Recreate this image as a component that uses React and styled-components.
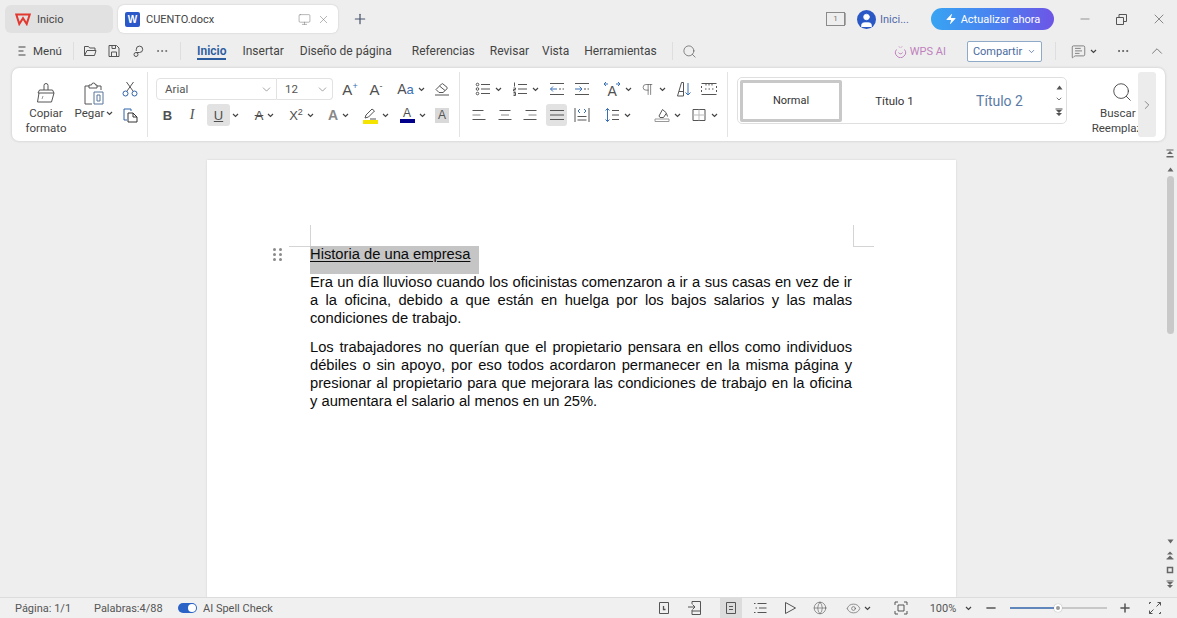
import styled, { createGlobalStyle } from "styled-components";
import { ChevronDown, ChevronRight, ChevronUp, Eye, Globe, Minus, Monitor, MessageSquareText, MoreHorizontal, Pilcrow, Plus, Search, User, X, Zap } from "lucide-react";

const GlobalStyle = createGlobalStyle`
  html, body { margin: 0; padding: 0; background: #eeeeee; }
  body { font-family: Roboto, "Open Sans", sans-serif; color: #444; }
`;

const Shell = styled.div`
  width: 1177px;
  height: 618px;
  display: flex;
  flex-direction: column;
  overflow: hidden;
  background: #eeeeee;
`;

const TitleBar = styled.div`
  height: 36px;
  flex: none;
  display: flex;
  align-items: flex-start;
  padding: 5px 0 0 5px;
  box-sizing: border-box;
`;

const Tab = styled.div`
  height: 28px;
  width: ${(p) => p.$w}px;
  margin-right: 5px;
  border-radius: 6px;
  display: flex;
  align-items: center;
  gap: 6px;
  padding: 0 8px 0 ${(p) => p.$pad}px;
  box-sizing: border-box;
  font-size: 11px;
  background: ${(p) => (p.$active ? "#fff" : "#e1e1e1")};
  box-shadow: ${(p) => (p.$active ? "0 0 2px rgba(0,0,0,.18)" : "none")};
`;

const TabName = styled.span`
  flex: 1;
`;

const WordBadge = styled.span`
  width: 15px;
  height: 15px;
  border-radius: 2px;
  background: #2b57c9;
  color: #fff;
  font: bold 10px "Liberation Sans", sans-serif;
  display: flex;
  align-items: center;
  justify-content: center;
`;

const TabClose = styled.span`
  display: flex;
  margin-left: 0;
  color: #777;
`;

const AddTab = styled.div`
  width: 34px;
  height: 28px;
  display: flex;
  align-items: center;
  justify-content: center;
  color: #46536b;
`;

const Spacer = styled.div`
  flex: 1;
`;

const TitleRight = styled.div`
  display: flex;
  align-items: center;
  height: 28px;
`;

const BookCount = styled.span`
  width: 17px;
  height: 12px;
  border: 1px solid #8a8a8a;
  font-size: 8px;
  line-height: 12px;
  text-align: center;
  color: #777;
  margin-right: 12px;
  box-shadow: 2px 0 0 -1px #aaa;
`;

const Avatar = styled.span`
  width: 19px;
  height: 19px;
  border-radius: 50%;
  background: #2a58c4;
  color: #fff;
  overflow: hidden;
  display: flex;
  align-items: flex-end;
  justify-content: center;
`;

const AccountName = styled.span`
  font-size: 11px;
  color: #5169a8;
  margin: 0 24px 0 4px;
  width: 27px;
  white-space: nowrap;
`;

const Upgrade = styled.div`
  width: 123px;
  height: 22px;
  border-radius: 11px;
  background: linear-gradient(90deg, #38a4f2 0%, #4b7ff0 55%, #6d55e6 100%);
  color: #fff;
  font-size: 11px;
  display: flex;
  align-items: center;
  justify-content: center;
  gap: 4px;
  margin-right: 12px;
`;

const WinBtn = styled.div`
  width: 37px;
  display: flex;
  justify-content: center;
  color: #555;
`;

const MenuBar = styled.div`
  height: 30px;
  flex: none;
  display: flex;
  align-items: center;
  padding-left: 17px;
  font-size: 12px;
`;

const MenuBtn = styled.div`
  display: flex;
  align-items: center;
  gap: 6px;
  font-size: 11.5px;
  width: 56px;
`;

const Sep = styled.div`
  width: 1px;
  height: ${(p) => p.$h || 20}px;
  background: #dedede;
  flex: none;
  margin: ${(p) => p.$m || "0"};
`;

const QuickIcons = styled.div`
  display: flex;
  align-items: center;
  gap: 10px;
  color: #555;
  margin: 0 11px 0 9px;
`;

const NavTab = styled.div`
  position: relative;
  margin-left: ${(p) => p.$ml}px;
  font-weight: ${(p) => (p.$active ? 600 : 400)};
  color: ${(p) => (p.$active ? "#2b5c9e" : "#444")};
  white-space: nowrap;
  &::after {
    content: "";
    display: ${(p) => (p.$active ? "block" : "none")};
    position: absolute;
    left: 0;
    right: 0;
    bottom: -2px;
    height: 2px;
    background: #2b5c9e;
  }
`;

const AiBtn = styled.div`
  display: flex;
  align-items: center;
  gap: 3px;
  font-size: 11px;
  color: #c080bd;
  margin-right: 21px;
`;

const ShareBtn = styled.div`
  width: 75px;
  height: 21px;
  border: 1px solid #8fa9c8;
  border-radius: 2px;
  box-sizing: border-box;
  background: #fff;
  color: #4a6aa0;
  font-size: 11px;
  display: flex;
  align-items: center;
  justify-content: center;
  gap: 5px;
  margin-right: 13px;
`;

const RightTools = styled.div`
  display: flex;
  align-items: center;
  color: #555;
  padding-right: 8px;
`;

const Ribbon = styled.div`
  height: 73px;
  flex: none;
  margin: 2px 12px 0 12px;
  background: #fff;
  border-radius: 7px;
  box-shadow: 0 0 3px rgba(0, 0, 0, 0.18);
  display: flex;
  align-items: stretch;
  overflow: hidden;
`;

const Group = styled.div`
  width: ${(p) => p.$w}px;
  flex: none;
  box-sizing: border-box;
  border-right: ${(p) => (p.$line ? "1px solid #e3e3e3" : "none")};
  margin: 4px 0;
  display: flex;
  padding-left: ${(p) => p.$pl || 0}px;
`;

const BigTool = styled.div`
  width: ${(p) => p.$w}px;
  display: flex;
  flex-direction: column;
  align-items: center;
  font-size: 11.5px;
  line-height: 15px;
  color: #444;
  text-align: center;
  padding-top: 10px;
  white-space: nowrap;
`;

const BigIcon = styled.div`
  height: 24px;
  color: #555;
`;

const PasteLabel = styled.span`
  display: flex;
  align-items: center;
  gap: 2px;
`;

const CopyCol = styled.div`
  width: 20px;
  display: flex;
  flex-direction: column;
  align-items: center;
  gap: 10px;
  padding-top: 9px;
  color: #4d6590;
`;

const ToolStack = styled.div`
  display: flex;
  flex-direction: column;
  gap: 4px;
  padding-top: 6px;
`;

const ToolRow = styled.div`
  display: flex;
  height: 22px;
  align-items: center;
`;

const Tool = styled.div`
  width: ${(p) => p.$w}px;
  margin-left: ${(p) => p.$ml || 0}px;
  height: 22px;
  flex: none;
  display: flex;
  align-items: center;
  justify-content: center;
  gap: ${(p) => p.$gap || 4}px;
  color: #555;
  border-radius: 3px;
  background: ${(p) => (p.$on ? "#e2e2e2" : "transparent")};
`;

const CaretMark = styled.svg`
  width: 7px;
  height: 5px;
  flex: none;
  fill: none;
  stroke: #444;
  stroke-width: 1.2;
`;

const Letter = styled.span`
  font-family: ${(p) => p.$font || '"Liberation Sans", sans-serif'};
  font-size: ${(p) => p.$size || 14}px;
  font-weight: ${(p) => p.$weight || 400};
  font-style: ${(p) => (p.$italic ? "italic" : "normal")};
  color: ${(p) => p.$color || "#505050"};
  line-height: 1;
  display: inline-block;
  text-decoration: ${(p) => p.$deco || "none"};
`;

const Sup = styled.sup`
  font-size: 9px;
  color: ${(p) => p.$color || "inherit"};
  line-height: 0;
`;

const ColorLine = styled.span`
  display: block;
  height: 4px;
  width: 15px;
  background: ${(p) => p.$c};
`;

const Swatch = styled.div`
  display: flex;
  flex-direction: column;
  align-items: center;
`;

const BoxA = styled.span`
  width: 14px;
  height: 15px;
  background: #d9d9d9;
  font: 12px "Liberation Sans", sans-serif;
  color: #555;
  display: flex;
  align-items: center;
  justify-content: center;
  margin-left: 4px;
`;

const Select = styled.div`
  height: 22px;
  width: ${(p) => p.$w}px;
  box-sizing: border-box;
  border: 1px solid #e2e2e2;
  border-left: ${(p) => (p.$joined ? "none" : "1px solid #e2e2e2")};
  border-radius: ${(p) => (p.$joined ? "0 4px 4px 0" : "4px 0 0 4px")};
  display: flex;
  align-items: center;
  justify-content: space-between;
  padding: 0 3px 0 8px;
  font-size: 11.5px;
  color: #555;
`;

const StyleBox = styled.div`
  width: 330px;
  height: 47px;
  margin: 9px 0 0 9px;
  border: 1px solid #dfdfdf;
  border-radius: 5px;
  box-sizing: border-box;
  display: flex;
  align-items: center;
  padding-left: 2px;
`;

const StyleItem = styled.div`
  width: ${(p) => p.$w}px;
  height: 42px;
  box-sizing: border-box;
  display: flex;
  align-items: center;
  justify-content: center;
  border: ${(p) => (p.$on ? "3px solid #c8c8c8" : "none")};
  border-radius: 2px;
  font-size: ${(p) => p.$size || 11.5}px;
  color: ${(p) => p.$color || "#333"};
  flex: none;
`;

const StyleArrows = styled.div`
  margin-left: auto;
  width: 16px;
  display: flex;
  flex-direction: column;
  align-items: center;
  gap: 5px;
  color: #555;
`;

const FindTool = styled.div`
  width: 49px;
  margin-left: 22px;
  overflow: hidden;
  flex: none;
`;

const FindInner = styled.div`
  width: 66px;
  display: flex;
  flex-direction: column;
  align-items: center;
  padding-top: 13px;
  font-size: 11.5px;
  line-height: 15px;
  white-space: nowrap;
  color: #444;
`;

const FindLabel = styled.span`
  margin-top: ${(p) => p.$mt || 0}px;
`;

const MoreBtn = styled.div`
  width: 18px;
  margin: 4px 0;
  background: #ececec;
  border-radius: 3px;
  display: flex;
  align-items: center;
  justify-content: center;
  color: #444;
  flex: none;
`;

const DocArea = styled.div`
  flex: 1;
  display: flex;
  min-height: 0;
`;

const PageWrap = styled.div`
  flex: 1;
  padding-top: 19px;
  overflow: hidden;
  display: flex;
  justify-content: center;
`;

const Page = styled.div`
  width: 749px;
  height: 800px;
  background: #fff;
  box-shadow: 0 0 2px rgba(0, 0, 0, 0.12);
  padding: 86px 104px 0 103px;
  box-sizing: border-box;
  position: relative;
  font-family: "Liberation Sans", Arial, sans-serif;
  font-size: 14.72px;
  line-height: 18.2px;
  color: #0c0c0c;
`;

const CropMark = styled.div`
  position: absolute;
  top: ${(p) => p.$top}px;
  left: ${(p) => p.$left}px;
  width: ${(p) => p.$w}px;
  height: ${(p) => p.$h}px;
  background: #d4d4d4;
`;

const Handle = styled.div`
  position: absolute;
  left: 66px;
  top: 88px;
  width: 9px;
  display: grid;
  grid-template-columns: 3px 3px;
  gap: 2px 3px;
  & > span {
    width: 3px;
    height: 3px;
    border-radius: 50%;
    background: #8a8a8a;
  }
`;

const Heading = styled.div`
  width: 169px;
  height: 28px;
  margin-bottom: -1px;
  line-height: 16.5px;
  background: #c5c5c5;
  & > u {
    text-underline-offset: 2px;
  }
`;

const Para = styled.p`
  margin: 0 0 10px;
  text-align: justify;
`;

const Rail = styled.div`
  width: 14px;
  flex: none;
  display: flex;
  flex-direction: column;
  align-items: center;
  padding-top: 8px;
  color: #666;
`;

const RailArrow = styled.div`
  margin-top: ${(p) => p.$mt || 0}px;
  display: flex;
`;

const Thumb = styled.div`
  width: 7px;
  height: 158px;
  flex: none;
  margin-top: 4px;
  background: #c9c9c9;
  border-radius: 4px;
`;

const RailBottom = styled.div`
  margin-top: auto;
  padding-bottom: 8px;
  display: flex;
  flex-direction: column;
  align-items: center;
  gap: 6px;
`;

const StatusBar = styled.div`
  height: 21px;
  flex: none;
  border-top: 1px solid #dcdcdc;
  box-sizing: border-box;
  background: #f0f0f0;
  display: flex;
  align-items: center;
  padding-left: 15px;
  font-size: 11px;
  color: #555;
`;

const StatusText = styled.span`
  width: ${(p) => p.$w}px;
  white-space: nowrap;
`;

const Toggle = styled.span`
  width: 19px;
  height: 10px;
  border-radius: 5px;
  background: #2a62c6;
  margin-right: 6px;
  display: flex;
  justify-content: flex-end;
  align-items: center;
  padding-right: 1px;
  box-sizing: border-box;
  &::after {
    content: "";
    width: 8px;
    height: 8px;
    border-radius: 50%;
    background: #fff;
  }
`;

const StatusTools = styled.div`
  margin-left: auto;
  display: flex;
  align-items: center;
  padding-right: 2px;
  height: 100%;
  color: #555;
`;

const StatusBtn = styled.div`
  width: ${(p) => p.$w || 29}px;
  margin-left: ${(p) => p.$ml || 0}px;
  height: 21px;
  display: flex;
  align-items: center;
  justify-content: center;
  gap: ${(p) => p.$gap || 3}px;
  background: ${(p) => (p.$on ? "#dcdcdc" : "transparent")};
  flex: none;
`;

const Slider = styled.div`
  width: 97px;
  height: 2px;
  background: linear-gradient(90deg, #6186bb 0 50%, #c8c8c8 50% 100%);
  position: relative;
  margin: 0 8px 0 6px;
  &::after {
    content: "";
    position: absolute;
    left: 44px;
    top: -3px;
    width: 8px;
    height: 8px;
    box-sizing: border-box;
    border-radius: 50%;
    background: #999;
    border: 2px solid #fff;
    box-shadow: 0 0 1px #888;
  }
`;

const Blue = "#3a6fb5";

function Glyph({ size = 16, sw = 1, children }) {
  return (
    <svg width={size} height={size} viewBox={`0 0 ${size} ${size}`} fill="none" stroke="currentColor" strokeWidth={sw} style={{ flex: "none" }}>
      {children}
    </svg>
  );
}

function Caret() {
  return (
    <CaretMark viewBox="0 0 7 5">
      <path d="M1 1l2.500 2.500L6 1" />
    </CaretMark>
  );
}

function WpsLogo() {
  return (
    <svg width="16" height="13" viewBox="0 0 16 13" fill="none" stroke="#e2382f" strokeWidth="2">
      <path d="M1.300 1.600H14.700L11.700 11 8 5.200 4.300 11z" />
    </svg>
  );
}

function Drop({ w, ml, children }) {
  return (
    <Tool $w={w} $ml={ml}>
      {children}
      <Caret />
    </Tool>
  );
}

const LinesIcon = ({ a, b }) => (
  <Glyph>
    <path d={a} />
    <path d={b} stroke="#888" />
  </Glyph>
);

const MenuIcon = () => <Glyph size={10}><path d="M1.500 1h7M1.500 5h5M1.500 9h7" /></Glyph>;
const OpenIcon = () => <Glyph size={14}><path d="M1.500 11.500v-9h4l1.200 1.500h5.300v2M1.500 11.500h10l1.500-5H4z" /></Glyph>;
const SaveIcon = () => <Glyph size={14}><path d="M2 1.500h7.500l2.500 2.500v8.500H2zM5 1.500v3h3.500v-3M4.500 12.500V8h5v4.500" /></Glyph>;
const PathIcon = () => <Glyph size={14}><path d="M5 8.500h3.500a3.200 3.200 0 1 0-3.200-3.200V7M5 8.500a2 2 0 1 0 0 4 2 2 0 0 0 0-4z" /></Glyph>;
const BrushIcon = () => (
  <Glyph size={24}>
    <path d="M10 8V3.500a2 2 0 0 1 4 0V8M4 11l1.500-3h13l1.500 3zM5 11l-1.500 9h14l2.500-9" />
    <path d="M8 17l1-3" stroke="#999" />
  </Glyph>
);
const PasteIcon = () => (
  <Glyph size={24}>
    <path d="M7 4H3v18h7M15 4h4v4M7 6V3h2.500a2 2 0 0 1 4 0H15v3z" />
    <path d="M12 10h9v12h-9zM15 13v6h3v-6z" stroke="#58749c" />
  </Glyph>
);
const ScissorsIcon = () => (
  <Glyph>
    <path d="M5 10L11.500 1M11 10L4.500 1" stroke="#555" />
    <circle cx="3.500" cy="12.500" r="2.500" stroke="#2f62a8" />
    <circle cx="12.500" cy="12.500" r="2.500" stroke="#2f62a8" />
  </Glyph>
);
const CopyIcon = () => (
  <Glyph>
    <path d="M5 13H2V2h7v2" stroke="#2f62a8" />
    <path d="M6 6h5l4 4v5H6zM11 6v4h4" stroke="#333" />
  </Glyph>
);
const EraserIcon = () => <Glyph><path d="M2 8.500L7.500 3a1 1 0 0 1 1.500 0l4 3.300a1 1 0 0 1 0 1.500L9 11.500H5zM5.500 5L11 9.500M1 14h14" /></Glyph>;
const BulletIcon = () => (
  <Glyph>
    <path d="M6 3.500h9M6 8h9M6 12.500h9" />
    <circle cx="2.500" cy="3.500" r="1.300" />
    <circle cx="2.500" cy="8" r="1.300" />
    <circle cx="2.500" cy="12.500" r="1.300" />
  </Glyph>
);
const NumberIcon = () => (
  <Glyph>
    <path d="M6 3.500h9M6 8h9M6 12.500h9M2.500 1.500v4M1.500 7h2v1.500h-2V10h2M1.500 11.500h2v3h-2M1.500 13h2" />
  </Glyph>
);
const OutdentIcon = () => (
  <Glyph>
    <path d="M1 2.500h14M1 13.500h14M10 8h2M13.500 8h1.500" stroke="#555" />
    <path d="M1.500 8H8M4 5.500L1.500 8 4 10.500" stroke={Blue} />
  </Glyph>
);
const IndentIcon = () => (
  <Glyph>
    <path d="M1 2.500h14M1 13.500h14M10 8h2M13.500 8h1.500" stroke="#555" />
    <path d="M1 8h7M5.500 5.500L8 8l-2.500 2.500" stroke={Blue} />
  </Glyph>
);
const GrowIcon = () => (
  <Glyph size={18}>
    <text x="4.500" y="16" fontSize="14" fontFamily="Liberation Sans" fill="#505050" stroke="none">A</text>
    <path d="M1 4h4M3 2L1 4l2 2M13 4h4M15 2l2 2-2 2" stroke={Blue} />
  </Glyph>
);
const SortIcon = () => (
  <Glyph>
    <path d="M1.500 15L5.500 1.500h2V15M3 10.500h4.500M1.500 15h6" />
    <path d="M12 2v12M9.500 11.500L12 14l2.500-2.500" stroke={Blue} />
  </Glyph>
);
const RulerIcon = () => (
  <Glyph>
    <path d="M0.500 2.500h15M0.500 13.500h15" />
    <path d="M0.500 5v2M0.500 9v2M15.500 5v2M15.500 9v2M4 8h1.500M7.500 8H9M11 8h1.500M5 3v1.500M8 3v1.500M11 3v1.500" />
  </Glyph>
);
const AlignL = () => <LinesIcon a="M1.500 3.500h11M1.500 12.500h13" b="M1.500 8h8" />;
const AlignC = () => <LinesIcon a="M2.500 3.500h11M1.500 12.500h13" b="M4 8h8" />;
const AlignR = () => <LinesIcon a="M3.500 3.500h11M1.500 12.500h13" b="M6.500 8h8" />;
const AlignJ = () => <Glyph><path d="M1 3.500h14M1 8h14M1 12.500h14" /></Glyph>;
const DistIcon = () => (
  <Glyph>
    <path d="M1 1v14M15 1v14M3.500 9.500h9M3.500 13h9" />
    <path d="M6 2L4 4l2 2M10 2l2 2-2 2" stroke={Blue} />
  </Glyph>
);
const SpacingIcon = () => (
  <Glyph>
    <path d="M3.500 1.500v13M1.500 3.500l2-2 2 2M1.500 12.500l2 2 2-2" stroke={Blue} />
    <path d="M8 3.500h7M8 8h7M8 12.500h7" />
  </Glyph>
);
const BucketIcon = () => (
  <Glyph>
    <path d="M5 9l3.500-6.500 4 3.500-3 4.500H6zM12.500 6.500l1 3" />
    <path d="M1 12h14v2.500H1z" stroke="#999" />
  </Glyph>
);
const BorderIcon = () => (
  <Glyph>
    <path d="M2 2.500h12v11H2z" />
    <path d="M8 2.500v11M2 8h12" stroke="#bbb" />
  </Glyph>
);
const PenIcon = () => (
  <Glyph size={14}>
    <path d="M2 12l1-3 6-6 2.500 2-6 6zM7 13h6" />
  </Glyph>
);
const RestoreIcon = () => <Glyph size={13}><path d="M1.500 4.500h7v7h-7zM4 4.500V1.500h7.500v7H8.500" /></Glyph>;
const AiIcon = () => (
  <Glyph size={13}>
    <path d="M2.500 4.500a5 5 0 1 0 8 0M5 1.500l.8 1M8 1.500l-.8 1M4.500 7.500a2.200 2.200 0 0 0 4 0" />
  </Glyph>
);
const HistoryIcon = () => (
  <Glyph size={14}>
    <path d="M2.500 1.500h9v11h-9z" />
    <path d="M6.500 5v3.500h2" strokeWidth="1.300" />
  </Glyph>
);
const ImportIcon = () => (
  <Glyph size={16}>
    <path d="M5 1.500h8.500v13H5M5 11h8.500" />
    <path d="M1 7h7M5.500 4.500L8 7 5.500 9.500M5 1.500v2.500M5 10v4.500" />
  </Glyph>
);
const PageIcon = () => <Glyph size={14}><path d="M2.500 1.500h9v11h-9zM5 5.500h4M5 8.500h4" /></Glyph>;
const OutlineIcon = () => <Glyph size={14}><path d="M4.500 2.500h9M6 7h7.500M4.500 11.500h9M1 2.500h1.500M2.500 7H4M1 11.500h1.500" /></Glyph>;
const PlayIcon = () => <Glyph size={14}><path d="M2.500 1.500L12.500 7 2.500 12.500z" /></Glyph>;
const FocusIcon = () => (
  <Glyph size={14}>
    <path d="M4 1H1v3M10 1h3v3M4 13H1v-3M10 13h3v-3" />
    <path d="M4 4h6v6H4z" />
  </Glyph>
);
const FullIcon = () => (
  <Glyph size={14}>
    <path d="M8.500 5.500L12.500 1.500M9.500 1.500h3v3M5.500 8.500L1.500 12.500M1.500 9.500v3h3M1.500 3V1.500H3M12.500 11v1.500H11" />
  </Glyph>
);
const RailTriUp = () => <svg width="7" height="5" viewBox="0 0 7 5" fill="currentColor"><path d="M3.500 0.500L6.500 4.500H.5z" /></svg>;
const RailTriDown = () => <svg width="7" height="5" viewBox="0 0 7 5" fill="currentColor"><path d="M.5 .5h6L3.500 4.500z" /></svg>;
const RailFirst = () => <svg width="8" height="9" viewBox="0 0 8 9" fill="currentColor"><path d="M.5 .5h7v1h-7zM4 2l3 3H1zM.5 7h7v1.500h-7z" /></svg>;
const RailPrev = () => <svg width="8" height="9" viewBox="0 0 8 9" fill="currentColor"><path d="M4 .5l3 3H1zM4 4.500l3 3H1zM.5 7.500h7v1h-7z" /></svg>;
const RailDot = () => <svg width="8" height="8" viewBox="0 0 8 8" fill="none" stroke="currentColor" strokeWidth="1.500"><path d="M1.500 1.500h5v5h-5z" /></svg>;
const RailNext = () => <svg width="8" height="9" viewBox="0 0 8 9" fill="currentColor"><path d="M.5 .5h7v1h-7zM1 2h6L4 5zM1 5h6L4 8z" /></svg>;

export default function App() {
  return (
    <Shell>
      <GlobalStyle />
      <TitleBar>
        <Tab $w={108} $pad={10}>
          <WpsLogo />
          <TabName>Inicio</TabName>
        </Tab>
        <Tab $w={220} $pad={7} $active>
          <WordBadge>W</WordBadge>
          <TabName>CUENTO.docx</TabName>
          <TabClose><Monitor size={13} strokeWidth={1} /></TabClose>
          <TabClose><X size={13} strokeWidth={1} /></TabClose>
        </Tab>
        <AddTab>
          <Plus size={16} strokeWidth={1.8} />
        </AddTab>
        <Spacer />
        <TitleRight>
          <BookCount>1</BookCount>
          <Avatar>
            <User size={17} fill="#fff" strokeWidth={1} />
          </Avatar>
          <AccountName>Inici...</AccountName>
          <Upgrade>
            <Zap size={12} fill="#fff" strokeWidth={0} />
            Actualizar ahora
          </Upgrade>
          <WinBtn><Minus size={14} strokeWidth={1} /></WinBtn>
          <WinBtn><RestoreIcon /></WinBtn>
          <WinBtn><X size={16} strokeWidth={1} /></WinBtn>
        </TitleRight>
      </TitleBar>

      <MenuBar>
        <MenuBtn>
          <MenuIcon />
          Menú
        </MenuBtn>
        <Sep $h={18} />
        <QuickIcons>
          <OpenIcon />
          <SaveIcon />
          <PathIcon />
          <MoreHorizontal size={14} strokeWidth={1.2} />
        </QuickIcons>
        <Sep $h={18} />
        <NavTab $ml={16} $active>Inicio</NavTab>
        <NavTab $ml={16}>Insertar</NavTab>
        <NavTab $ml={16}>Diseño de página</NavTab>
        <NavTab $ml={20}>Referencias</NavTab>
        <NavTab $ml={15}>Revisar</NavTab>
        <NavTab $ml={13}>Vista</NavTab>
        <NavTab $ml={15}>Herramientas</NavTab>
        <Sep $h={18} $m="0 0 0 15px" />
        <Search size={15} strokeWidth={1.1} color="#555" style={{ marginLeft: 9 }} />
        <Spacer />
        <AiBtn>
          <AiIcon />
          WPS AI
        </AiBtn>
        <ShareBtn>
          Compartir
          <ChevronDown size={9} />
        </ShareBtn>
        <Sep $h={18} />
        <RightTools>
          <Tool $w={56}>
            <MessageSquareText size={15} strokeWidth={1.1} />
            <Caret />
          </Tool>
          <Tool $w={22}><MoreHorizontal size={14} strokeWidth={1.6} /></Tool>
          <Tool $w={24} $ml={11}><ChevronUp size={18} strokeWidth={1} /></Tool>
        </RightTools>
      </MenuBar>

      <Ribbon>
        <Group $w={136} $line $pl={12}>
          <BigTool $w={44}>
            <BigIcon><BrushIcon /></BigIcon>
            Copiar
            <br />
            formato
          </BigTool>
          <BigTool $w={52}>
            <BigIcon><PasteIcon /></BigIcon>
            <PasteLabel>Pegar<Caret /></PasteLabel>
          </BigTool>
          <CopyCol>
            <ScissorsIcon />
            <CopyIcon />
          </CopyCol>
        </Group>

        <Group $w={312} $line $pl={8}>
          <ToolStack>
            <ToolRow>
              <Select $w={121}>Arial<ChevronDown size={13} strokeWidth={1} /></Select>
              <Select $w={56} $joined>12<ChevronDown size={13} strokeWidth={1} /></Select>
              <Tool $w={26} $ml={4}><Letter $size={15}>A<Sup $color={Blue}>+</Sup></Letter></Tool>
              <Tool $w={26}><Letter $size={15}>A<Sup>-</Sup></Letter></Tool>
              <Drop w={44}><Letter $size={14}>A<Letter $size={13} $color={Blue}>a</Letter></Letter></Drop>
              <Tool $w={18}><EraserIcon /></Tool>
            </ToolRow>
            <ToolRow>
              <Tool $w={23}><Letter $weight={700} $size={13}>B</Letter></Tool>
              <Tool $w={26}><Letter $italic $size={14} $font='"Liberation Serif", serif'>I</Letter></Tool>
              <Tool $w={23} $ml={2} $on><Letter $size={13} $deco="underline">U</Letter></Tool>
              <Tool $w={11}><Caret /></Tool>
              <Drop w={37} ml={5}><Letter $size={13} $deco="line-through">A</Letter></Drop>
              <Drop w={37}><Letter $size={13}>X<Sup>2</Sup></Letter></Drop>
              <Drop w={37}><Letter $size={14} $weight={700} $color="#888">A</Letter></Drop>
              <Drop w={37}><Swatch><PenIcon /><ColorLine $c="#f4e400" /></Swatch></Drop>
              <Drop w={37}><Swatch><Letter $size={12}>A</Letter><ColorLine $c="#00008b" /></Swatch></Drop>
              <BoxA>A</BoxA>
            </ToolRow>
          </ToolStack>
        </Group>

        <Group $w={268} $line $pl={10}>
          <ToolStack>
            <ToolRow>
              <Drop w={36}><BulletIcon /></Drop>
              <Drop w={38}><NumberIcon /></Drop>
              <Tool $w={25}><OutdentIcon /></Tool>
              <Tool $w={26}><IndentIcon /></Tool>
              <Drop w={44}><GrowIcon /></Drop>
              <Drop w={28}><Pilcrow size={15} strokeWidth={1.1} /></Drop>
              <Tool $w={34}><SortIcon /></Tool>
              <Tool $w={16}><RulerIcon /></Tool>
            </ToolRow>
            <ToolRow>
              <Tool $w={18}><AlignL /></Tool>
              <Tool $w={34}><AlignC /></Tool>
              <Tool $w={16}><AlignR /></Tool>
              <Tool $w={21} $ml={8} $on><AlignJ /></Tool>
              <Tool $w={30}><DistIcon /></Tool>
              <Drop w={40}><SpacingIcon /></Drop>
              <Drop w={41} ml={10}><BucketIcon /></Drop>
              <Drop w={33}><BorderIcon /></Drop>
            </ToolRow>
          </ToolStack>
        </Group>

        <StyleBox>
          <StyleItem $w={102} $on $size={11}>Normal</StyleItem>
          <StyleItem $w={105}>Título 1</StyleItem>
          <StyleItem $w={105} $size={14} $color="#5a7ba6">Título 2</StyleItem>
          <StyleArrows>
            <RailTriUp />
            <ChevronDown size={8} strokeWidth={2.4} />
            <RailNext />
          </StyleArrows>
        </StyleBox>

        <FindTool>
          <FindInner>
            <Search size={22} strokeWidth={1} />
            <FindLabel $mt={3}>Buscar y</FindLabel>
            <FindLabel>Reemplazar</FindLabel>
          </FindInner>
        </FindTool>
        <MoreBtn><ChevronRight size={14} strokeWidth={1} /></MoreBtn>
      </Ribbon>

      <DocArea>
        <PageWrap>
          <Page>
            <CropMark $top={65} $left={103} $w={1} $h={21} />
            <CropMark $top={86} $left={82} $w={21} $h={1} />
            <CropMark $top={65} $left={646} $w={1} $h={21} />
            <CropMark $top={86} $left={646} $w={21} $h={1} />
            <Handle>
              <span /><span /><span /><span /><span /><span />
            </Handle>
            <Heading><u>Historia de una empresa</u></Heading>
            <Para>
              Era un día lluvioso cuando los oficinistas comenzaron a ir a sus casas en vez de ir a la oficina, debido a
              que están en huelga por los bajos salarios y las malas condiciones de trabajo.
            </Para>
            <Para>
              Los trabajadores no querían que el propietario pensara en ellos como individuos débiles o sin apoyo, por
              eso todos acordaron permanecer en la misma página y presionar al propietario para que mejorara las
              condiciones de trabajo en la oficina y aumentara el salario al menos en un 25%.
            </Para>
          </Page>
        </PageWrap>
        <Rail>
          <RailFirst />
          <RailArrow $mt={9}><RailTriUp /></RailArrow>
          <Thumb />
          <RailBottom>
            <RailTriDown />
            <RailArrow $mt={1}><RailPrev /></RailArrow>
            <RailDot />
            <RailNext />
          </RailBottom>
        </Rail>
      </DocArea>

      <StatusBar>
        <StatusText $w={79}>Página: 1/1</StatusText>
        <StatusText $w={84}>Palabras:4/88</StatusText>
        <Toggle />
        <StatusText>AI Spell Check</StatusText>
        <StatusTools>
          <StatusBtn $w={28}><HistoryIcon /></StatusBtn>
          <StatusBtn $w={34}><ImportIcon /></StatusBtn>
          <StatusBtn $w={22} $ml={8} $on><PageIcon /></StatusBtn>
          <StatusBtn $w={36}><OutlineIcon /></StatusBtn>
          <StatusBtn $w={24}><PlayIcon /></StatusBtn>
          <StatusBtn $w={36}><Globe size={14} strokeWidth={1} /></StatusBtn>
          <StatusBtn $w={40}><Eye size={15} strokeWidth={1} /><Caret /></StatusBtn>
          <StatusBtn $w={46}><FocusIcon /></StatusBtn>
          <StatusBtn $w={54} $gap={9}>100%<Caret /></StatusBtn>
          <StatusBtn $w={26}><Minus size={14} strokeWidth={2.6} /></StatusBtn>
          <Slider />
          <StatusBtn $w={20}><Plus size={14} strokeWidth={2.6} /></StatusBtn>
          <StatusBtn $w={40}><FullIcon /></StatusBtn>
        </StatusTools>
      </StatusBar>
    </Shell>
  );
}
